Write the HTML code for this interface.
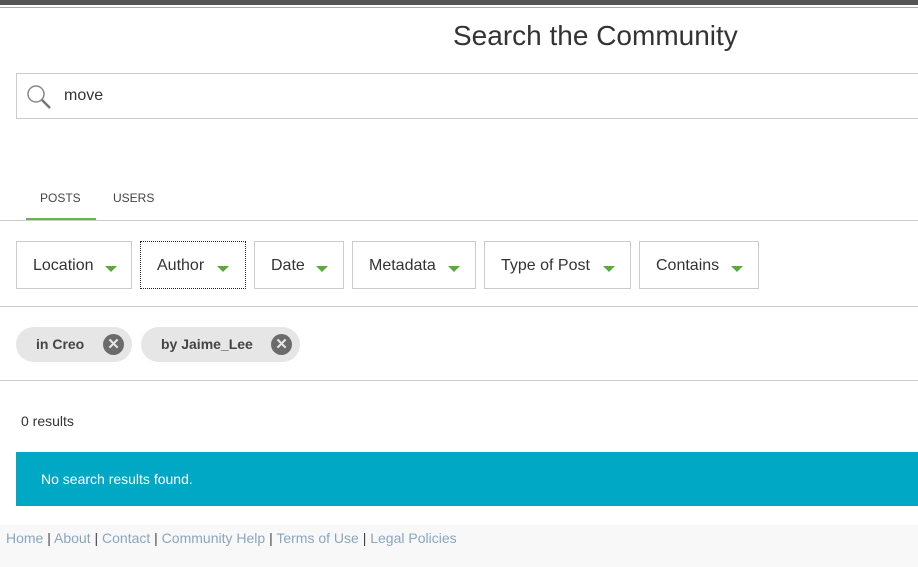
<!DOCTYPE html>
<html><head><style>
*{margin:0;padding:0;box-sizing:border-box}
body{width:918px;height:567px;overflow:hidden;background:#fff;font-family:"Liberation Sans",Arial,sans-serif;color:#333;position:relative}
.a{position:absolute}
.btn{position:absolute;top:241px;height:48px;border:1px solid #ccc;font-size:16px;line-height:47px;padding-left:16px;color:#333}
.btn i{position:absolute;top:24px;width:0;height:0;border-left:6px solid transparent;border-right:6px solid transparent;border-top:6px solid #5aaa3c}
.chip{position:absolute;top:327px;height:35px;border-radius:18px;background:#e6e6e6;font-weight:bold;font-size:14px;line-height:35px;color:#444;padding-left:20px}
.x{position:absolute;top:7px;width:21px;height:21px;border-radius:50%;background:#6b6b6b;color:#e6e6e6;font-size:15px;line-height:21px;text-align:center;font-weight:bold}
</style></head><body>
<div class="a" style="left:0;top:0;width:918px;height:5px;background:#555"></div>
<div class="a" style="left:0;top:7px;width:918px;height:1px;background:#aaa"></div>
<div class="a" style="left:453px;top:20px;font-size:28px;color:#333">Search the Community</div>
<div class="a" style="left:16px;top:73px;width:910px;height:46px;border:1px solid #ccc"></div>
<svg class="a" style="left:26px;top:84px" width="26" height="26" viewBox="0 0 26 26"><circle cx="10" cy="10" r="8" fill="none" stroke="#888" stroke-width="1.5"/><line x1="16" y1="16" x2="24" y2="24" stroke="#777" stroke-width="2.5"/></svg>
<div class="a" style="left:64px;top:87px;font-size:16px;color:#333">move</div>
<div class="a" style="left:40px;top:191px;font-size:12px;color:#444">POSTS</div>
<div class="a" style="left:113px;top:191px;font-size:12px;color:#444">USERS</div>
<div class="a" style="left:26px;top:218px;width:70px;height:3px;background:#6ab04c"></div>
<div class="a" style="left:0;top:220px;width:918px;height:1px;background:#ccc"></div>
<div class="btn" style="left:16px;width:116px">Location<i style="left:88px"></i></div>
<div class="btn" style="left:140px;width:106px;border:1px dotted #222">Author<i style="left:76px"></i></div>
<div class="btn" style="left:254px;width:90px">Date<i style="left:61px"></i></div>
<div class="btn" style="left:352px;width:124px">Metadata<i style="left:95px"></i></div>
<div class="btn" style="left:484px;width:147px">Type of Post<i style="left:118px"></i></div>
<div class="btn" style="left:639px;width:120px">Contains<i style="left:91px"></i></div>
<div class="a" style="left:0;top:306px;width:918px;height:1px;background:#ccc"></div>
<div class="chip" style="left:16px;width:116px">in Creo<span class="x" style="left:87px">✕</span></div>
<div class="chip" style="left:141px;width:159px">by Jaime_Lee<span class="x" style="left:130px">✕</span></div>
<div class="a" style="left:0;top:380px;width:918px;height:1px;background:#ccc"></div>
<div class="a" style="left:21px;top:413px;font-size:14px;color:#333">0 results</div>
<div class="a" style="left:16px;top:452px;width:910px;height:54px;background:#00a8c6"></div>
<div class="a" style="left:41px;top:471px;font-size:14px;color:#fff">No search results found.</div>
<div class="a" style="left:0;top:525px;width:918px;height:42px;background:#f8f8f8"></div>
<div class="a" style="left:6px;top:530px;font-size:14px;color:#8aa6bf"><span>Home</span> <span style="color:#444">|</span> About <span style="color:#444">|</span> Contact <span style="color:#444">|</span> Community Help <span style="color:#444">|</span> Terms of Use <span style="color:#444">|</span> Legal Policies</div>
</body></html>
